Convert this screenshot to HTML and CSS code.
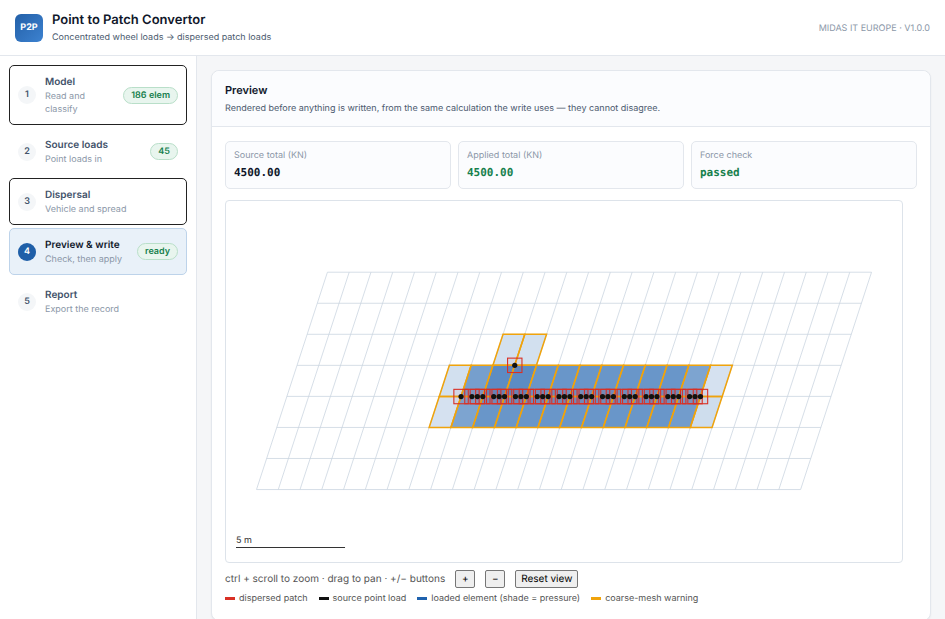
FILE: index.html
```html
<!DOCTYPE html>
<html lang="en">
<head>
    <meta charset="UTF-8">
    <meta name="viewport" content="width=device-width, initial-scale=1.0">
    <title>Point to Patch Convertor</title>
    <link rel="stylesheet" href="styles.css">
</head>
<body>
    <header class="topbar">
        <div class="logo">P2P</div>
        <div class="brand">
            <h1>Point to Patch Convertor</h1>
            <p>Concentrated wheel loads → dispersed patch loads</p>
        </div>
        <div class="version">MIDAS IT EUROPE · V1.0.0</div>
    </header>

    <div class="layout">
        <nav class="steps">
            <button class="step outlined" type="button">
                <span class="num">1</span>
                <span class="step-text"><span class="name">Model</span><span class="hint">Read and classify</span></span>
                <span class="badge">186 elem</span>
            </button>
            <button class="step" type="button">
                <span class="num">2</span>
                <span class="step-text"><span class="name">Source loads</span><span class="hint">Point loads in</span></span>
                <span class="badge">45</span>
            </button>
            <button class="step outlined" type="button">
                <span class="num">3</span>
                <span class="step-text"><span class="name">Dispersal</span><span class="hint">Vehicle and spread</span></span>
            </button>
            <button class="step active" type="button">
                <span class="num">4</span>
                <span class="step-text"><span class="name">Preview &amp; write</span><span class="hint">Check, then apply</span></span>
                <span class="badge">ready</span>
            </button>
            <button class="step" type="button">
                <span class="num">5</span>
                <span class="step-text"><span class="name">Report</span><span class="hint">Export the record</span></span>
            </button>
        </nav>

        <main class="content">
            <section class="card">
                <div class="card-head">
                    <h2>Preview</h2>
                    <p>Rendered before anything is written, from the same calculation the write uses — they cannot disagree.</p>
                </div>
                <div class="card-body">
                    <div class="stats">
                        <div class="stat">
                            <div class="label">Source total (KN)</div>
                            <div class="value">4500.00</div>
                        </div>
                        <div class="stat">
                            <div class="label">Applied total (KN)</div>
                            <div class="value ok">4500.00</div>
                        </div>
                        <div class="stat">
                            <div class="label">Force check</div>
                            <div class="value ok">passed</div>
                        </div>
                    </div>

                    <svg class="plot" id="plot" viewBox="0 0 676 361">
                        <g id="mesh"></g>
                        <g id="loaded"></g>
                        <g id="patches"></g>
                        <g id="points"></g>
                        <text class="scale-text" x="10" y="342">5 m</text>
                        <path class="scale-line" d="M10 346.500H119"/>
                    </svg>

                    <div class="controls">
                        <span>ctrl + scroll to zoom · drag to pan · +/− buttons</span>
                        <button type="button" aria-label="Zoom in">+</button>
                        <button type="button" aria-label="Zoom out">−</button>
                        <button type="button">Reset view</button>
                    </div>
                    <div class="legend">
                        <span class="key"><i class="patch"></i>dispersed patch</span>
                        <span class="key"><i class="point"></i>source point load</span>
                        <span class="key"><i class="element"></i>loaded element (shade = pressure)</span>
                        <span class="key"><i class="warning"></i>coarse-mesh warning</span>
                    </div>
                </div>
            </section>
        </main>
    </div>

    <script src="script.js"></script>
</body>
</html>
```

FILE: styles.css
```css
* {
    box-sizing: border-box;
}

body {
    margin: 0;
    min-height: 100vh;
    display: flex;
    flex-direction: column;
    background: #f5f6f8;
    color: #0f172a;
    font-family: 'Inter', sans-serif;
    font-size: 10px;
    text-rendering: geometricPrecision;
    overflow: hidden;
}

h1, h2, p {
    margin: 0;
}

button {
    font-family: inherit;
    text-rendering: inherit;
}

.topbar {
    display: flex;
    align-items: center;
    gap: 9px;
    padding: 11px 15px 10px;
    background: #fff;
    border-bottom: 1px solid #e3e7ed;
}

.logo {
    width: 28px;
    height: 28px;
    border-radius: 6px;
    background: linear-gradient(135deg, #2360a8, #3d82d0);
    color: #fff;
    font-size: 9px;
    font-weight: 700;
    line-height: 28px;
    text-align: center;
}

.brand h1 {
    font-size: 13px;
    font-weight: 600;
    line-height: 18px;
}

.brand p {
    margin-top: 2px;
    color: #4b5a6e;
    font-size: 9px;
    line-height: 14px;
}

.version {
    margin-left: auto;
    color: #8b97a8;
    font-size: 9px;
}

.layout {
    flex: 1;
    display: flex;
}

.steps {
    flex: 0 0 197px;
    display: flex;
    flex-direction: column;
    gap: 3px;
    padding: 9px;
    background: #fff;
    border-right: 1px solid #e3e7ed;
}

.step {
    display: flex;
    align-items: center;
    gap: 9px;
    padding: 8px;
    border: 1px solid transparent;
    border-radius: 5px;
    background: #fff;
    text-align: left;
}

.step.outlined {
    border-color: #222;
}

.step.active {
    background: #e9f1f9;
    border-color: #bdd3ea;
}

.num {
    flex: none;
    width: 18px;
    height: 18px;
    border-radius: 50%;
    background: #f4f6f8;
    color: #42526a;
    font-size: 9px;
    font-weight: 600;
    line-height: 18px;
    text-align: center;
}

.active .num {
    background: #1f5fa8;
    color: #fff;
}

.step-text {
    flex: 1;
}

.name,
.hint {
    display: block;
}

.name {
    color: #42526a;
    font-size: 10px;
    font-weight: 600;
    line-height: 16px;
}

.active .name {
    color: #0f172a;
}

.hint {
    color: #8b97a8;
    font-size: 9px;
    line-height: 13px;
}

.badge {
    padding: 0 7px;
    border: 1px solid #b9dfc9;
    border-radius: 9px;
    background: #e8f5ee;
    color: #17804d;
    font-size: 9px;
    font-weight: 600;
    line-height: 15px;
}

.content {
    flex: 1;
    min-width: 0;
    padding: 14px;
}

.card {
    border: 1px solid #e3e7ed;
    border-radius: 8px;
    background: #fff;
    box-shadow: 0 1px 2px rgba(15, 23, 42, 0.05);
}

.card-head {
    padding: 11px 13px 9px;
    border-bottom: 1px solid #e3e7ed;
    border-radius: 8px 8px 0 0;
    background: #fbfcfe;
}

.card-head h2 {
    font-size: 11px;
    font-weight: 600;
    line-height: 16px;
}

.card-head p {
    margin-top: 3px;
    color: #4b5a6e;
    font-size: 9px;
    line-height: 16px;
}

.card-body {
    padding: 14px 13px;
}

.stats {
    display: grid;
    grid-template-columns: repeat(3, 1fr);
    gap: 7px;
    margin-bottom: 11px;
}

.stat {
    padding: 7px 8px;
    border: 1px solid #e3e7ed;
    border-radius: 5px;
    background: #fbfcfe;
}

.label {
    color: #8b97a8;
    font-size: 9px;
    line-height: 14px;
}

.value {
    margin-top: 2px;
    font-family: 'DejaVu Sans Mono', monospace;
    font-size: 11px;
    font-weight: 700;
    line-height: 16px;
}

.value.ok {
    color: #17804d;
}

.plot {
    display: block;
    width: 98%;
    border: 1px solid #dde3ea;
    border-radius: 4px;
}

.mesh-line {
    fill: none;
    stroke: #cbd5e1;
    stroke-width: 0.8;
}

.cell {
    fill: #1f62ae;
    stroke: none;
}

.cell-edge {
    fill: none;
    stroke: #f0a30c;
    stroke-width: 1.5;
}

.patch-box {
    fill: #d93025;
    fill-opacity: 0.05;
    stroke: #d93025;
    stroke-width: 1.1;
}

.point-dot {
    fill: #111;
}

.scale-text {
    fill: #333;
    font-size: 9px;
}

.scale-line {
    stroke: #333;
}

.controls {
    display: flex;
    align-items: center;
    gap: 10px;
    margin-top: 7px;
    color: #555;
    font-size: 10px;
}

.controls button {
    min-width: 20px;
    height: 18px;
    padding: 0 5px;
    border: 1px solid #767676;
    border-radius: 2px;
    background: #efefef;
    color: #000;
    font-size: 10px;
    line-height: 16px;
}

.legend {
    display: flex;
    gap: 11px;
    margin-top: 3px;
    color: #555;
    font-size: 9px;
    line-height: 15px;
}

.key {
    display: flex;
    align-items: center;
    gap: 4px;
}

.key i {
    width: 10px;
    height: 3px;
}

.patch {
    background: #d93025;
}

.point {
    background: #111;
}

.element {
    background: #1f62ae;
}

.warning {
    background: #f0a30c;
}
```

FILE: script.js
```javascript
const NS = 'http://www.w3.org/2000/svg';

// skewed mesh: 25 x 7 elements, 1 m wide
const COLS = 25;
const ROWS = 7;
const DX = 21.76;
const DY = 31.04;
const SKEW = 10.13;
const X0 = 101.4;
const Y0 = 71.2;

function add(parent, tag, attrs) {
    const el = document.createElementNS(NS, tag);
    for (const key in attrs) {
        el.setAttribute(key, attrs[key]);
    }
    document.getElementById(parent).appendChild(el);
}

function node(c, r) {
    return [X0 + c * DX - r * SKEW, Y0 + r * DY];
}

function cell(c, r) {
    return [node(c, r), node(c + 1, r), node(c + 1, r + 1), node(c, r + 1)].join(' ');
}

// Mesh lines
for (let r = 0; r <= ROWS; r++) {
    add('mesh', 'polyline', { class: 'mesh-line', points: [node(0, r), node(COLS, r)].join(' ') });
}
for (let c = 0; c <= COLS; c++) {
    add('mesh', 'polyline', { class: 'mesh-line', points: [node(c, 0), node(c, ROWS)].join(' ') });
}

// Loaded elements: [column, row, shade]
const loaded = [[9, 2, 0.2], [10, 2, 0.2]];
for (let c = 7; c < 20; c++) {
    let top = 0.67;
    let bottom = 0.67;
    if (c === 7) { top = 0.2; bottom = 0.19; }
    if (c === 8) { top = 0.61; bottom = 0.58; }
    if (c === 9 || c === 10) { top = 0.73; }
    if (c === 18) { top = 0.58; bottom = 0.63; }
    if (c === 19) { top = 0.19; bottom = 0.22; }
    loaded.push([c, 3, top], [c, 4, bottom]);
}
loaded.forEach(([c, r, shade]) => {
    add('loaded', 'polygon', { class: 'cell', points: cell(c, r), 'fill-opacity': shade });
});
loaded.forEach(([c, r]) => {
    add('loaded', 'polygon', { class: 'cell-edge', points: cell(c, r) });
});

// Point loads and their patches
const loads = [[288.7, 164.3], [235, 195.5]];
for (let i = 0; i < 11; i++) {
    [0.5, 0.75, 1].forEach(step => {
        loads.push([235 + (i + step) * DX, 195.5]);
    });
}
loads.forEach(([x, y]) => {
    add('patches', 'rect', { class: 'patch-box', x: x - 7.2, y: y - 7.2, width: 14.4, height: 14.4 });
    add('points', 'circle', { class: 'point-dot', cx: x, cy: y, r: 2.6 });
});
```
